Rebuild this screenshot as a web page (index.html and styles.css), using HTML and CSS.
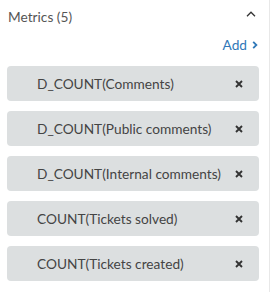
FILE: index.html
```html
<!DOCTYPE html>
<html lang="en">
<head>
    <meta charset="UTF-8">
    <title>Metrics</title>
<link rel="stylesheet" href="styles.css">
</head>
<body>
<div class="panel">
    <div class="head">
        <span class="title">Metrics (5)</span>
        <svg class="caret" width="10" height="6" viewBox="0 0 10 6"><path d="M1 5.2 L5 1.2 L9 5.2" fill="none" stroke="#333" stroke-width="1.3"/></svg>
    </div>
    <div class="addrow">
        <a class="add">Add <svg width="6" height="8" viewBox="0 0 6 8"><path d="M1.2 0.8 L4.4 4 L1.2 7.2" fill="none" stroke="#2f78b8" stroke-width="1.8"/></svg></a>
    </div>
    <ul class="list">
        <li class="pill"><span>D_COUNT(Comments)</span><svg class="x" width="8" height="8" viewBox="0 0 8 8"><path d="M1 1 L7 7 M7 1 L1 7" stroke="#333" stroke-width="1.9"/></svg></li>
        <li class="pill"><span>D_COUNT(Public comments)</span><svg class="x" width="8" height="8" viewBox="0 0 8 8"><path d="M1 1 L7 7 M7 1 L1 7" stroke="#333" stroke-width="1.9"/></svg></li>
        <li class="pill"><span>D_COUNT(Internal comments)</span><svg class="x" width="8" height="8" viewBox="0 0 8 8"><path d="M1 1 L7 7 M7 1 L1 7" stroke="#333" stroke-width="1.9"/></svg></li>
        <li class="pill"><span>COUNT(Tickets solved)</span><svg class="x" width="8" height="8" viewBox="0 0 8 8"><path d="M1 1 L7 7 M7 1 L1 7" stroke="#333" stroke-width="1.9"/></svg></li>
        <li class="pill"><span>COUNT(Tickets created)</span><svg class="x" width="8" height="8" viewBox="0 0 8 8"><path d="M1 1 L7 7 M7 1 L1 7" stroke="#333" stroke-width="1.9"/></svg></li>
    </ul>
</div>
</body>
</html>
```

FILE: styles.css
```css
body{
    margin: 0;
    background-color: #ffffff;
    font-family: Lato, "Noto Sans", sans-serif;
}
.panel{
    width: 269px;
    height: 292px;
    border-right: 1px solid #e8e8e8;
}
.head{
    display: flex;
    justify-content: space-between;
    align-items: center;
    padding: 7px 13px 0 8px;
    height: 20px;
    line-height: 20px;
}
.title{
    font-size: 13.7px;
    color: #555555;
}
.caret{
    margin-top: -6px;
}
.addrow{
    display: flex;
    justify-content: flex-end;
    padding: 8px 11px 0 0;
    height: 20px;
    line-height: 20px;
}
.add{
    font-size: 13.7px;
    color: #2f78b8;
    display: flex;
    align-items: center;
    gap: 5px;
}
.list{
    list-style: none;
    margin: 0;
    padding: 11px 0 0 7px;
    display: flex;
    flex-direction: column;
    gap: 10px;
}
.pill{
    width: 252px;
    height: 35px;
    box-sizing: border-box;
    background-color: #dcdfe0;
    border-radius: 4px;
    display: flex;
    align-items: center;
    justify-content: space-between;
    padding: 0 16px 0 30px;
    font-size: 13.7px;
    color: #444444;
}
```
